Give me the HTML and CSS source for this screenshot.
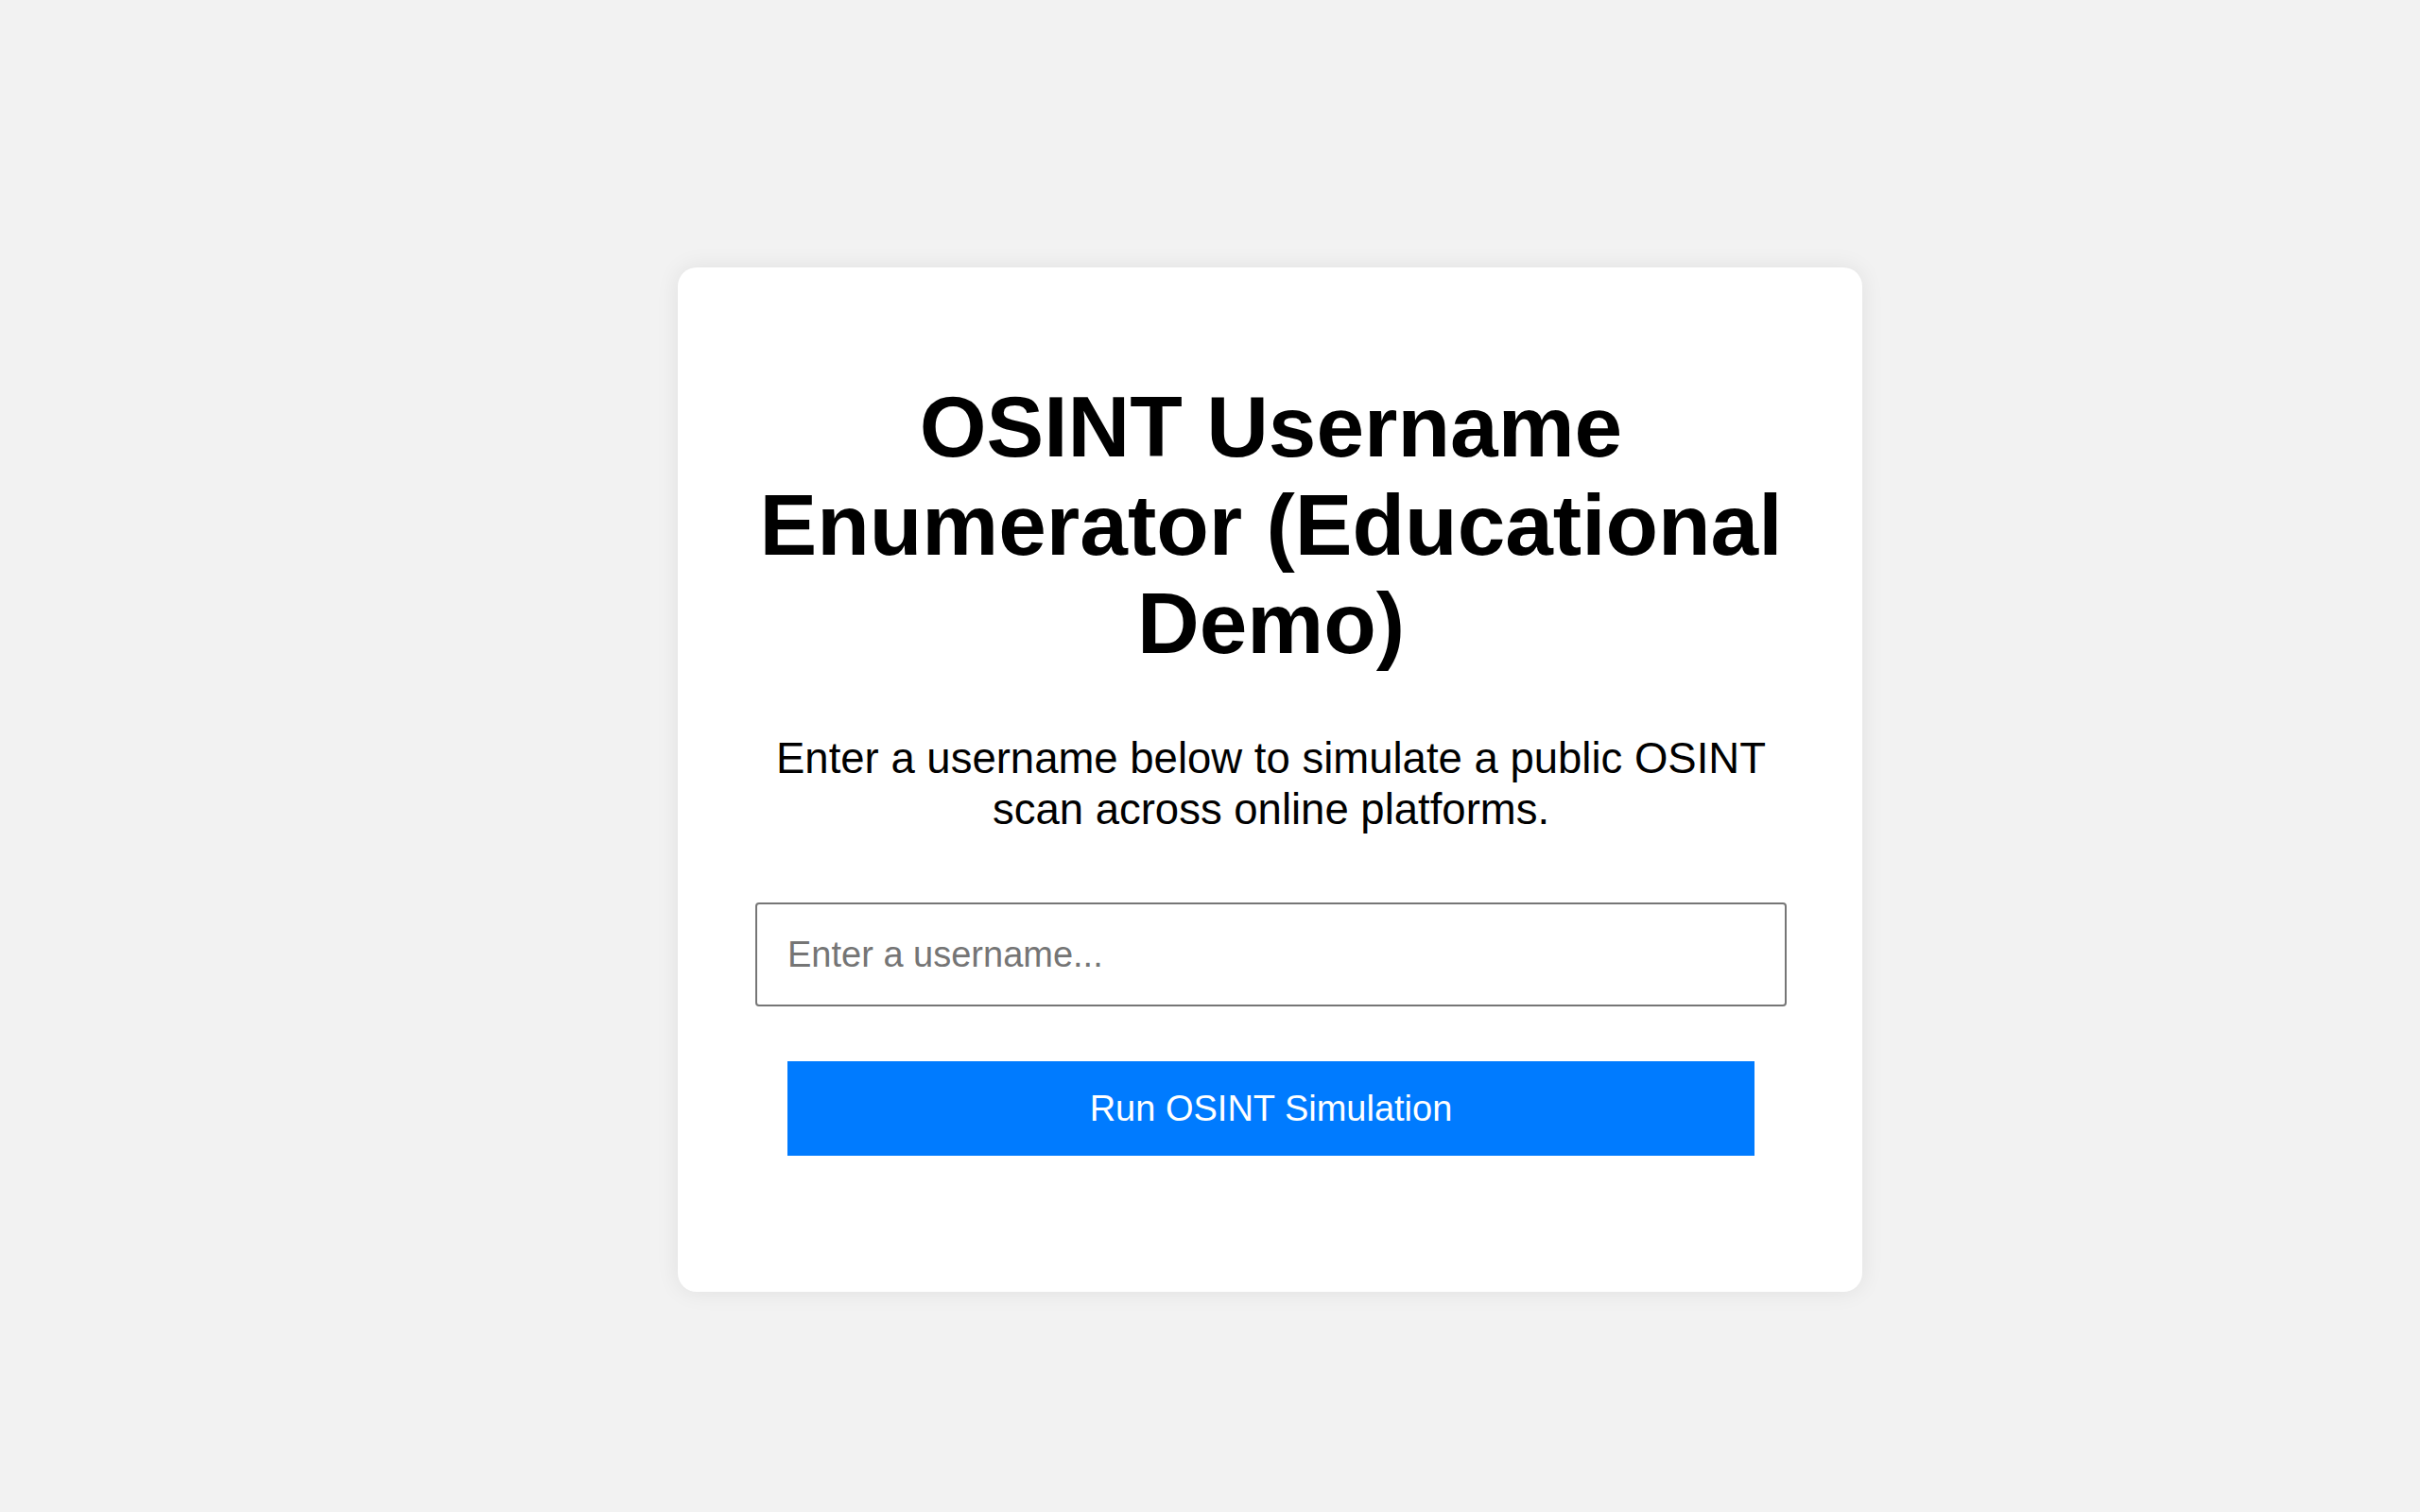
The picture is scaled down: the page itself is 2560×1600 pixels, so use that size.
FILE: index.html
```html
<!DOCTYPE html>
<html lang="en">
<head>
    <meta charset="UTF-8">
    <meta name="viewport" content="width=device-width, initial-scale=1.0">
    <title>OSINT Username Enumerator</title>
    <link rel="stylesheet" href="styles.css">
    <script src="script.js" defer></script>
</head>
<body>
    <div class="page">
        <div class="container">
            <h1>OSINT Username Enumerator (Educational Demo)</h1>
            <p class="intro">Enter a username below to simulate a public OSINT scan across online platforms.</p>

            <input type="text" id="username" placeholder="Enter a username...">
            <button onclick="runScan()">Run OSINT Simulation</button>

            <div id="results"></div>
        </div>
    </div>
</body>
</html>
```

FILE: styles.css
```css
body {
    font-family: 'Liberation Sans', Arial, sans-serif;
    margin: 0;
    padding: 0;
    background: #f2f2f2;
    color: #000;
}

.page {
    min-height: 3100px;
    display: flex;
    align-items: center;
    justify-content: center;
    padding-left: 127px;
    box-sizing: border-box;
}

.container {
    width: 1253px;
    box-sizing: border-box;
    background: #fff;
    padding: 117px 80px 144px 82px;
    border-radius: 20px;
    box-shadow: 0 0 24px rgba(0, 0, 0, 0.08);
    text-align: center;
}

h1 {
    font-size: 91px;
    font-weight: bold;
    margin: 0;
}

.intro {
    font-size: 45.5px;
    line-height: 1.18;
    margin: 64px 0 72px 0;
}

input[type="text"] {
    display: block;
    width: 100%;
    height: 110px;
    padding: 0 32px;
    border: 2px solid #767676;
    border-radius: 4px;
    font-family: inherit;
    font-size: 38px;
    box-sizing: border-box;
}

input::placeholder {
    color: #757575;
}

button {
    display: block;
    width: calc(100% - 68px);
    height: 100px;
    margin: 58px 34px 0 34px;
    background: #007bff;
    color: #fff;
    border: none;
    font-family: inherit;
    font-size: 38px;
    cursor: pointer;
}

button:hover {
    background: #0069d9;
}

#results:empty {
    display: none;
}
```

FILE: script.js
```js
window.scrollTo(0, 725);

function runScan() {
    const name = document.getElementById('username').value.trim();
    const results = document.getElementById('results');
    if (!name) {
        alert('Please enter a username.');
        return;
    }
    const sites = ['GitHub', 'Twitter', 'Reddit', 'Instagram'];
    results.innerText = sites.map(s => s + ': checked for "' + name + '"').join('\n');
}
```
